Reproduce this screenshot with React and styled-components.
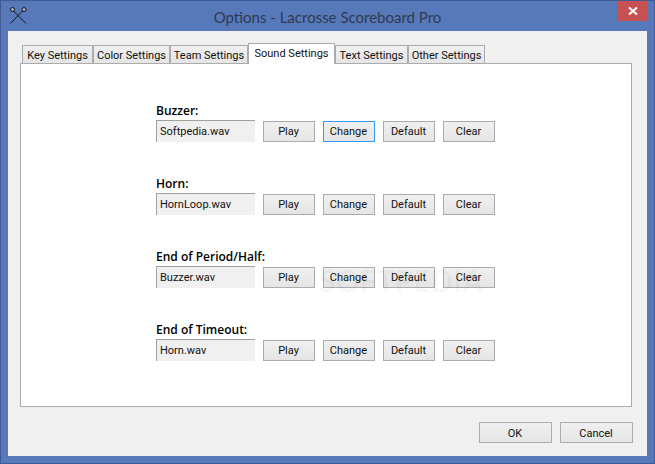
import React from 'react';
import styled, { createGlobalStyle } from 'styled-components';

const GlobalStyle = createGlobalStyle`
  html, body {
    margin: 0;
    padding: 0;
    background: #5879b9;
  }
  * {
    box-sizing: border-box;
  }
`;

const Frame = styled.div`
  width: 655px;
  height: 464px;
  background: #5879b9;
  border: 1px solid #3f5a94;
  display: flex;
  flex-direction: column;
  font-family: Roboto, "Open Sans", sans-serif;
  font-size: 11px;
  color: #111;
`;

const TitleBar = styled.div`
  height: 30px;
  flex: none;
  display: flex;
  align-items: center;
  justify-content: center;
  position: relative;
`;

const AppIcon = styled.svg`
  position: absolute;
  left: 9px;
  top: 6px;
`;

const Title = styled.div`
  font-family: Lato, sans-serif;
  font-size: 15px;
  color: #2e3a52;
  padding-top: 1px;
`;

const CloseButton = styled.div`
  position: absolute;
  right: 7px;
  top: 0;
  width: 30px;
  height: 20px;
  padding-left: 1px;
  background: #c75050;
  display: flex;
  align-items: center;
  justify-content: center;
`;

const Client = styled.div`
  flex: 1;
  margin: 0 7px 7px 7px;
  background: #f0f0f0;
  padding: 12px 15px 0 12px;
  display: flex;
  flex-direction: column;
`;

const TabStrip = styled.div`
  display: flex;
  align-items: flex-end;
  height: 21px;
  padding-left: 2px;
  position: relative;
  z-index: 1;
  margin-bottom: -1px;
`;

const Tab = styled.div`
  height: ${p => (p.$active ? '21px' : '19px')};
  width: ${p => p.$width}px;
  border: 1px solid #acacac;
  border-bottom: ${p => (p.$active ? 'none' : '1px solid #acacac')};
  background: ${p => (p.$active ? '#fff' : 'linear-gradient(#f0f0f0, #e5e5e5)')};
  display: flex;
  align-items: center;
  justify-content: center;
  white-space: nowrap;
  padding-top: ${p => (p.$active ? '0' : '1px')};
  padding-bottom: ${p => (p.$active ? '2px' : '0')};
`;

const Panel = styled.div`
  height: 344px;
  background: #fff;
  border: 1px solid #acacac;
  padding: 38px 0 0 135px;
  display: flex;
  flex-direction: column;
  gap: 22px;
  position: relative;
`;

const SoundRow = styled.div`
  display: flex;
  flex-direction: column;
  height: 51px;
`;

const RowLabel = styled.div`
  font-family: "Open Sans", sans-serif;
  font-size: 12px;
  font-weight: 600;
  height: 18px;
  line-height: 18px;
  color: #000;
`;

const Controls = styled.div`
  display: flex;
  align-items: center;
  gap: 8px;
`;

const FileField = styled.div`
  width: 99px;
  height: 22px;
  background: #f0f0f0;
  border-top: 1px solid #a0a0a0;
  border-left: 1px solid #a0a0a0;
  padding-left: 3px;
  line-height: 22px;
`;

const Button = styled.div`
  width: ${p => p.$width || 52}px;
  height: 21px;
  padding: 1px 1px 0 0;
  border: 1px solid ${p => (p.$focused ? '#3399ff' : '#acacac')};
  background: linear-gradient(#f0f0f0, #e5e5e5);
  display: flex;
  align-items: center;
  justify-content: center;
`;

const Watermark = styled.div`
  position: absolute;
  left: 298px;
  top: 201px;
  font-family: Lato, sans-serif;
  font-size: 30px;
  line-height: 30px;
  font-weight: 700;
  color: rgba(0, 0, 0, 0.04);
  pointer-events: none;
`;

const Footer = styled.div`
  display: flex;
  justify-content: flex-end;
  gap: 8px;
  padding-top: 15px;
  margin-right: -1px;
`;

const tabs = [
  { label: 'Key Settings', width: 71 },
  { label: 'Color Settings', width: 77 },
  { label: 'Team Settings', width: 78 },
  { label: 'Sound Settings', width: 87, active: true },
  { label: 'Text Settings', width: 73 },
  { label: 'Other Settings', width: 77 }
];

const sounds = [
  { label: 'Buzzer:', file: 'Softpedia.wav', focused: true },
  { label: 'Horn:', file: 'HornLoop.wav' },
  { label: 'End of Period/Half:', file: 'Buzzer.wav' },
  { label: 'End of Timeout:', file: 'Horn.wav' }
];

const App = () => {
  return (
    <>
      <GlobalStyle />
      <Frame>
        <TitleBar>
          <AppIcon width="18" height="18" viewBox="0 0 18 18" fill="none" stroke="#10141f" strokeWidth="1">
            <path d="M0.5 16.5 L12.5 4" />
            <path d="M16 16.5 L3.5 4" />
            <circle cx="14" cy="2.5" r="2" fill="#a8b0c0" />
            <circle cx="2.5" cy="2.5" r="2" fill="#a8b0c0" />
          </AppIcon>
          <Title>Options - Lacrosse Scoreboard Pro</Title>
          <CloseButton>
            <svg width="10" height="10" viewBox="0 0 10 10" stroke="#fff" strokeWidth="2">
              <path d="M1 1.5 L9 8.5 M9 1.5 L1 8.5" />
            </svg>
          </CloseButton>
        </TitleBar>
        <Client>
          <TabStrip>
            {tabs.map(tab => (
              <Tab key={tab.label} $width={tab.width} $active={tab.active}>
                {tab.label}
              </Tab>
            ))}
          </TabStrip>
          <Panel>
            {sounds.map(sound => (
              <SoundRow key={sound.label}>
                <RowLabel>{sound.label}</RowLabel>
                <Controls>
                  <FileField>{sound.file}</FileField>
                  <Button>Play</Button>
                  <Button $focused={sound.focused}>Change</Button>
                  <Button>Default</Button>
                  <Button>Clear</Button>
                </Controls>
              </SoundRow>
            ))}
            <Watermark>SOFTPEDIA</Watermark>
          </Panel>
          <Footer>
            <Button $width={73}>OK</Button>
            <Button $width={73}>Cancel</Button>
          </Footer>
        </Client>
      </Frame>
    </>
  );
};

export default App;
